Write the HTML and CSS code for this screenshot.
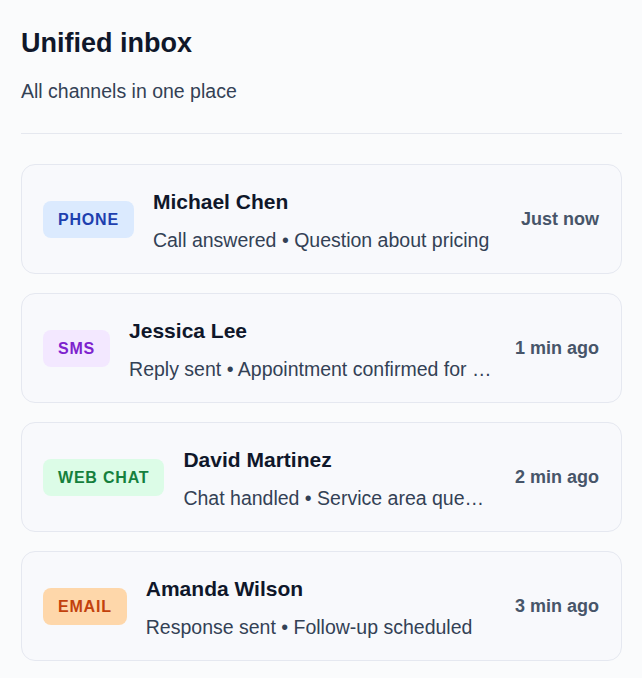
FILE: index.html
```html
<!DOCTYPE html>
<html>
<head>
<meta charset="utf-8">
<link rel="stylesheet" href="styles.css">
</head>
<body>
<div class="panel">
  <h1 class="title">Unified inbox</h1>
  <p class="subtitle">All channels in one place</p>
  <div class="divider"></div>
  <div class="list">
    <div class="card">
      <span class="badge badge-phone">PHONE</span>
      <div class="info">
        <div class="name">Michael Chen</div>
        <div class="desc">Call answered • Question about pricing</div>
      </div>
      <div class="time">Just now</div>
    </div>
    <div class="card">
      <span class="badge badge-sms">SMS</span>
      <div class="info">
        <div class="name">Jessica Lee</div>
        <div class="desc">Reply sent • Appointment confirmed for tomorrow at 3 PM</div>
      </div>
      <div class="time">1 min ago</div>
    </div>
    <div class="card">
      <span class="badge badge-chat">WEB CHAT</span>
      <div class="info">
        <div class="name">David Martinez</div>
        <div class="desc">Chat handled • Service area question answered</div>
      </div>
      <div class="time">2 min ago</div>
    </div>
    <div class="card">
      <span class="badge badge-email">EMAIL</span>
      <div class="info">
        <div class="name">Amanda Wilson</div>
        <div class="desc">Response sent • Follow-up scheduled</div>
      </div>
      <div class="time">3 min ago</div>
    </div>
  </div>
</div>
</body>
</html>
```
FILE: styles.css
```css
html, body {
  margin: 0;
  padding: 0;
  background: #fafbfc;
  font-family: "Liberation Sans", Arial, sans-serif;
}
.panel {
  padding: 27px 20px 0 21px;
}
.title {
  margin: 0;
  font-size: 27px;
  line-height: 32px;
  font-weight: 700;
  color: #0f172a;
}
.subtitle {
  margin: 20px 0 0;
  font-size: 19.5px;
  line-height: 24px;
  color: #334155;
}
.divider {
  height: 1px;
  background: #e5e8ef;
  margin-top: 30px;
}
.list {
  display: flex;
  flex-direction: column;
  gap: 19px;
  margin-top: 30px;
}
.card {
  display: flex;
  align-items: center;
  height: 110px;
  box-sizing: border-box;
  padding: 0 22px 0 21px;
  background: #f8f9fc;
  border: 1px solid #e5e8f0;
  border-radius: 14px;
}
.badge {
  flex: none;
  height: 37px;
  line-height: 37px;
  padding: 0 15px;
  border-radius: 8px;
  font-size: 16px;
  font-weight: 700;
  letter-spacing: 0.8px;
}
.badge-phone { background: #dbeafe; color: #1e40af; }
.badge-sms { background: #f3e8ff; color: #7e22ce; }
.badge-chat { background: #dcfce7; color: #15803d; }
.badge-email { background: #fed7aa; color: #c2410c; }
.info {
  flex: 1;
  min-width: 0;
  margin-left: 19px;
  margin-right: 22px;
  margin-top: 4px;
}
.name {
  font-size: 21px;
  line-height: 26px;
  font-weight: 700;
  color: #0f172a;
}
.desc {
  margin-top: 12px;
  font-size: 19.5px;
  line-height: 26px;
  color: #334155;
  white-space: nowrap;
  overflow: hidden;
  text-overflow: ellipsis;
}
.time {
  flex: none;
  font-size: 18px;
  font-weight: 700;
  color: #475569;
}
```
